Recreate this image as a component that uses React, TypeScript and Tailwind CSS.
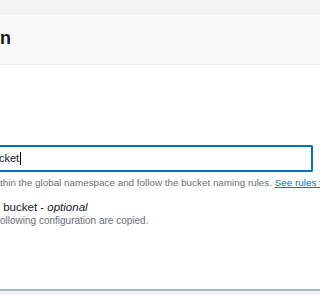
// Cropped view of the S3 "Create bucket" general configuration panel
export default function App() {
  return (
    <div
      className="w-[320px] h-[295px] overflow-hidden bg-white flex flex-col text-[#16191f]"
      style={{ fontFamily: '"Liberation Sans", Arial, sans-serif' }}
    >
      {/* page strip above the container */}
      <div className="h-[14px] shrink-0 bg-[#f2f3f3] border-b border-[#eaeded]" />

      {/* container header */}
      <div className="h-[51px] shrink-0 bg-[#fafafa] border-b border-[#eaeded] flex items-end pb-[17px]">
        <h2 className="text-[18px] leading-[18px] font-bold whitespace-nowrap">n</h2>
      </div>

      {/* form body */}
      <div className="flex-1 flex flex-col pt-[80px]">
        <div className="mr-[7px] h-[27px] border-y-2 border-r-2 border-[#0073bb] rounded-r-[2px] flex items-center">
          <span className="-ml-[1px] text-[11px] whitespace-nowrap">cket</span>
          <span className="ml-px w-px h-[13px] bg-black" />
        </div>

        <p className="mt-[5px] text-[9.85px] leading-[12px] text-[#687078] whitespace-nowrap">
          thin the global namespace and follow the bucket naming rules.{' '}
          <a className="text-[#0073bb] underline">See rules for bucket naming</a>
        </p>

        <div className="mt-[11px] text-[11.5px] leading-[14px] whitespace-nowrap">
          &nbsp;bucket - <i>optional</i>
        </div>
        <p className="mt-[1px] text-[10px] leading-[12px] text-[#687078] whitespace-nowrap">
          ollowing configuration are copied.
        </p>
      </div>

      {/* container bottom edge */}
      <div className="h-[6px] shrink-0 bg-[#f2f3f3] border-t-2 border-[#aab7b8]" />
    </div>
  )
}
